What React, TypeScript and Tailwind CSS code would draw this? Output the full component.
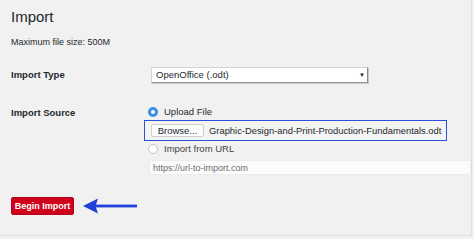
export default function App() {
  return (
    <div className="h-[239px] w-[474px] overflow-hidden bg-[#f1f1f1] font-['Liberation_Sans',Arial,sans-serif] text-[#23282d]">
      <div className="h-[236px] w-[472px] border-r border-b border-[#e0e0e0] pl-[11px] pt-[7px]">
        {/* Title */}
        <h1 className="h-[20px] text-[15px] leading-[20px]">Import</h1>
        <p className="mt-[9px] h-[12px] text-[9px] leading-[12px]">Maximum file size: 500M</p>

        {/* Import Type */}
        <div className="mt-[19px] flex h-[16px] items-center">
          <div className="w-[134px] text-[9.5px] font-bold leading-[16px]">Import Type</div>
          <div className="ml-[6px] flex h-[16px] w-[217px] items-center border border-[#d4d4d4] border-r-[#8a8a8a] border-b-[#9a9a9a] bg-white pl-[4px] shadow-[1px_1px_0_#c8c8c8]">
            <span className="flex-1 text-[9.5px] leading-[14px]">OpenOffice (.odt)</span>
            <span className="mr-[2px] text-[6px] leading-[14px] text-[#222]">▼</span>
          </div>
        </div>

        {/* Import Source */}
        <div className="mt-[23px] flex">
          <div className="w-[134px] pt-[1px] text-[9.5px] font-bold leading-[12px]">Import Source</div>
          <div className="flex flex-col">
            <label className="ml-[4px] flex h-[12px] items-center gap-[6px]">
              <span className="flex h-[10px] w-[10px] items-center justify-center rounded-full bg-[#3b8de8]">
                <span className="h-[4px] w-[4px] rounded-full bg-white" />
              </span>
              <span className="text-[9.5px] leading-[12px]">Upload File</span>
            </label>

            <div className="mt-[2px] flex h-[21px] w-[303px] items-center border border-[#2b52d4] bg-[#f4f4f4] pl-[6px]">
              <span className="flex h-[13px] w-[53px] items-center justify-center rounded-[2px] border border-[#d0d0d0] bg-[#fcfcfc] text-[9.5px] leading-[11px]">
                Browse...
              </span>
              <span className="ml-[5px] whitespace-nowrap text-[9.4px] leading-[12px]">
                Graphic-Design-and-Print-Production-Fundamentals.odt
              </span>
            </div>

            <label className="ml-[4px] mt-[2px] flex h-[12px] items-center gap-[6px]">
              <span className="h-[10px] w-[10px] rounded-full border border-[#c4c4c4] bg-white" />
              <span className="text-[9.5px] leading-[12px] text-[#444]">Import from URL</span>
            </label>

            <div className="ml-[5px] mt-[5px] flex h-[15px] w-[322px] items-center border border-[#ececec] bg-[#fbfbfb] pl-[3px]">
              <span className="text-[9px] leading-[12px] text-[#6f6f6f]">https://url-to-import.com</span>
            </div>
          </div>
        </div>

        {/* Submit */}
        <div className="mt-[22px] flex items-center">
          <button className="h-[18px] w-[63px] rounded-[2px] border border-[#b0071f] bg-[#d0021b] text-[9px] font-bold leading-[16px] text-white">
            Begin Import
          </button>
          <svg width="55" height="16" viewBox="0 0 55 16" className="ml-[9px]">
            <polygon points="0,8 15,0.5 12.5,8 15,15.5" fill="#1f3fd9" />
            <rect x="12" y="6.6" width="42" height="2.8" fill="#1f3fd9" />
          </svg>
        </div>
      </div>
    </div>
  )
}
